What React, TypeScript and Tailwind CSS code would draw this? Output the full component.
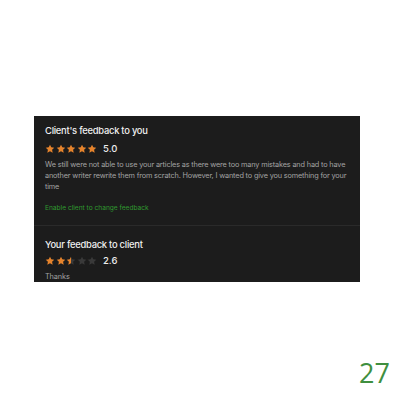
import React from "react";

const STAR =
  "M12 1.5l3.1 6.5 7.1.9-5.2 4.9 1.4 7.1L12 17.4l-6.4 3.5 1.4-7.1-5.2-4.9 7.1-.9z";

function Star({ fill }: { fill: number }) {
  const id = React.useId();
  return (
    <svg width="10" height="10" viewBox="0 0 24 24" className="block">
      <defs>
        <linearGradient id={id} x1="0" x2="1" y1="0" y2="0">
          <stop offset={fill} stopColor="#e5832c" />
          <stop offset={fill} stopColor="#393939" />
        </linearGradient>
      </defs>
      <path d={STAR} fill={`url(#${id})`} />
    </svg>
  );
}

function Rating({ value, fills }: { value: string; fills: number[] }) {
  return (
    <div className="flex items-center h-[11px] gap-[6px]">
      <div className="flex items-center gap-[0.5px]">
        {fills.map((f, i) => (
          <Star key={i} fill={f} />
        ))}
      </div>
      <span className="text-[9.5px] leading-[11px] font-medium text-[#ececec]">
        {value}
      </span>
    </div>
  );
}

export default function App() {
  return (
    <div
      className="w-[400px] h-[400px] bg-white pt-[116px] pl-[34px]"
      style={{ fontFamily: "Inter, 'Liberation Sans', sans-serif" }}
    >
      <div className="w-[326px] h-[166px] overflow-hidden bg-[#1c1c1c] flex flex-col">
        <div className="pl-[11px] pr-[2px] pt-[9px] pb-[12px] border-b border-[#2a2a2a]">
          <h2 className="text-[9.4px] leading-[12px] font-medium tracking-[-0.25px] text-[#f0f0f0]">
            Client's feedback to you
          </h2>
          <div className="mt-[6px]">
            <Rating value="5.0" fills={[1, 1, 1, 1, 1]} />
          </div>
          <p className="mt-[5px] text-[7.3px] leading-[11px] tracking-[-0.15px] text-[#a3a3a3]">
            We still were not able to use your articles as there were too many
            mistakes and had to have another writer rewrite them from scratch.
            However, I wanted to give you something for your time
          </p>
          <p className="mt-[11px] text-[6.6px] leading-[10px] text-[#2f9a2f]">
            Enable client to change feedback
          </p>
        </div>
        <div className="px-[11px] pt-[12.5px]">
          <h2 className="text-[9.4px] leading-[12px] font-medium tracking-[-0.25px] text-[#f0f0f0]">
            Your feedback to client
          </h2>
          <div className="mt-[4.5px]">
            <Rating value="2.6" fills={[1, 1, 0.55, 0, 0]} />
          </div>
          <p className="mt-[5.5px] text-[7.3px] leading-[10.5px] tracking-[-0.1px] text-[#a3a3a3]">
            Thanks
          </p>
        </div>
      </div>
      <div className="flex justify-end pr-[10px] mt-[78px]">
        <span
          className="text-[27px] leading-[26px] text-[#3f8f3f]"
          style={{ fontFamily: "'Open Sans', sans-serif" }}
        >
          27
        </span>
      </div>
    </div>
  );
}
